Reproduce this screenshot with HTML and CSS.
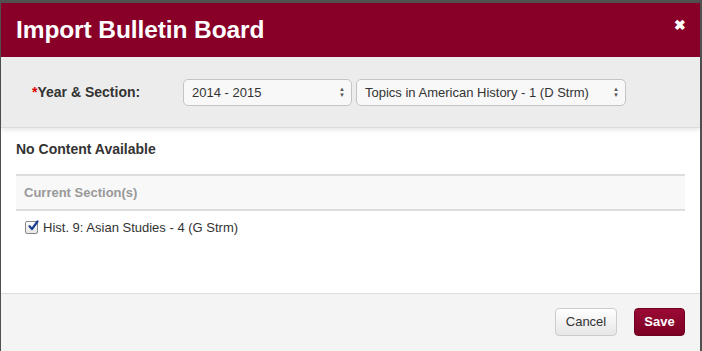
FILE: index.html
```html
<!DOCTYPE html>
<html>
<head>
<meta charset="utf-8">
<link rel="stylesheet" href="styles.css">
</head>
<body>
<div class="modal">
  <div class="modal-header">
    <h1 class="title">Import Bulletin Board</h1>
    <span class="close">&#10006;</span>
  </div>
  <div class="filter-bar">
    <label class="filter-label"><span class="req">*</span>Year &amp; Section:</label>
    <div class="select select-year"><span>2014 - 2015</span><span class="arrows">&#9650;<br>&#9660;</span></div>
    <div class="select select-section"><span>Topics in American History - 1 (D Strm)</span><span class="arrows">&#9650;<br>&#9660;</span></div>
  </div>
  <div class="modal-body">
    <div class="no-content">No Content Available</div>
    <div class="table-head">Current Section(s)</div>
    <div class="row">
      <span class="checkbox"><svg width="12" height="12" viewBox="0 0 12 12"><path d="M2.5 6.2 L5 9 L10.5 1.5" fill="none" stroke="#1b3f8f" stroke-width="2.2" stroke-linecap="round" stroke-linejoin="round"/></svg></span>
      <span>Hist. 9: Asian Studies - 4 (G Strm)</span>
    </div>
  </div>
  <div class="modal-footer">
    <button class="btn btn-cancel">Cancel</button>
    <button class="btn btn-save">Save</button>
  </div>
</div>
</body>
</html>
```

FILE: styles.css
```css
html, body {
  margin: 0;
  padding: 0;
  background: #505050;
  height: 351px;
  overflow: hidden;
}
body {
  font-family: "Liberation Sans", Arial, sans-serif;
  color: #333;
  padding: 3px 2px 0 1px;
  box-sizing: border-box;
}
.modal {
  background: #fff;
  height: 348px;
  display: flex;
  flex-direction: column;
}
.modal-header {
  background: #880028;
  height: 54px;
  display: flex;
  align-items: center;
  justify-content: space-between;
  padding: 0 14px 0 15px;
}
.title {
  margin: 0;
  color: #fff;
  font-size: 24.5px;
  font-weight: bold;
  letter-spacing: -0.1px;
  padding-bottom: 1px;
}
.close {
  color: #fff;
  font-size: 14px;
  font-weight: bold;
  margin-top: -10px;
}
.filter-bar {
  background: #ececec;
  height: 71px;
  display: flex;
  align-items: center;
  padding: 0 0 0 31px;
  box-shadow: 0 2px 5px rgba(0,0,0,0.10);
  border-bottom: 1px solid #dcdcdc;
  box-sizing: border-box;
  position: relative;
}
.filter-label {
  font-size: 14px;
  font-weight: bold;
  color: #333;
  width: 151px;
}
.req {
  color: #d00;
}
.select {
  height: 27px;
  box-sizing: border-box;
  border: 1px solid #c4c4c4;
  border-radius: 5px;
  background: #f8f8f8;
  display: flex;
  align-items: center;
  justify-content: space-between;
  padding: 0 6px 0 8px;
  font-size: 13px;
  color: #333;
}
.select-year {
  width: 169px;
  margin-right: 4px;
}
.select-section {
  width: 270px;
}
.arrows {
  font-size: 6px;
  line-height: 6px;
  color: #555;
  text-align: center;
}
.modal-body {
  flex: 1;
  padding: 13px 15px 0 15px;
}
.no-content {
  font-size: 14px;
  font-weight: bold;
  color: #333;
  height: 19px;
  margin-bottom: 14px;
}
.table-head {
  background: #f8f8f8;
  border-top: 2px solid #ddd;
  border-bottom: 2px solid #ddd;
  height: 33px;
  display: flex;
  align-items: center;
  padding-left: 8px;
  font-size: 13px;
  font-weight: bold;
  color: #999;
}
.row {
  display: flex;
  align-items: center;
  padding: 9px 0 0 9px;
  font-size: 13px;
  color: #333;
}
.checkbox {
  width: 11px;
  height: 11px;
  border: 1px solid #888;
  border-radius: 2px;
  background: linear-gradient(#fff, #e6e6e6);
  margin-right: 5px;
  display: inline-flex;
  align-items: center;
  justify-content: center;
  position: relative;
}
.checkbox svg {
  position: absolute;
  left: 1px;
  top: -2px;
}
.modal-footer {
  height: 58px;
  border-top: 1px solid #ddd;
  background: #f4f4f4;
  display: flex;
  align-items: center;
  justify-content: flex-end;
  padding: 0 15px 2px 0;
  gap: 17px;
  box-sizing: border-box;
}
.btn {
  height: 28px;
  font-family: "Liberation Sans", Arial, sans-serif;
  font-size: 13px;
  border-radius: 4px;
  padding: 0;
  margin-top: 0;
}
.btn-cancel {
  width: 62px;
  background: linear-gradient(#ffffff, #e6e6e6);
  border: 1px solid #ccc;
  color: #333;
}
.btn-save {
  width: 51px;
  background: linear-gradient(#9a0a35, #7c0024);
  border: 1px solid #6e0020;
  color: #fff;
  font-weight: bold;
}
```
